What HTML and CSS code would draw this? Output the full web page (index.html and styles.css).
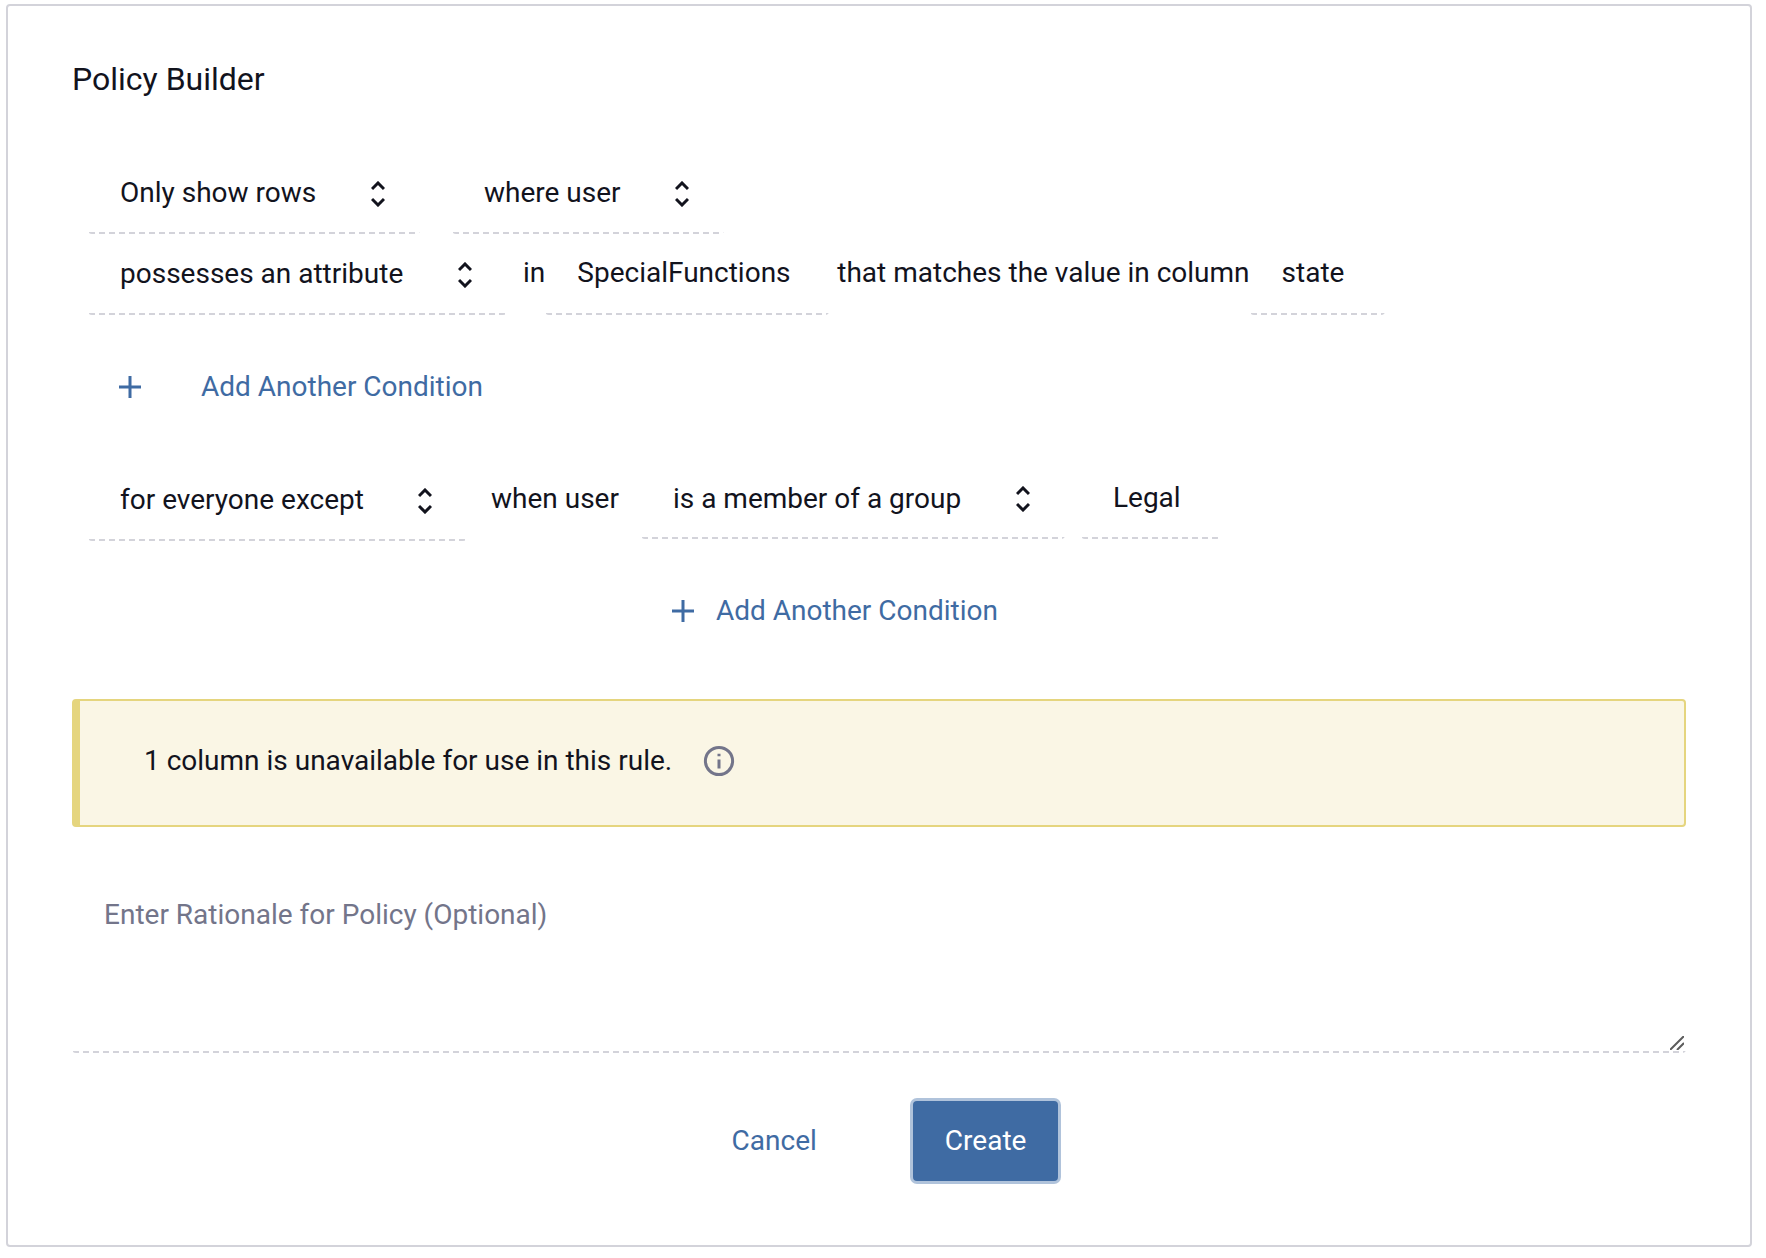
FILE: index.html
```html
<!DOCTYPE html>
<html lang="en">
<head>
<meta charset="utf-8">
<meta name="viewport" content="width=device-width, initial-scale=1">
<title>Policy Builder</title>
<link rel="stylesheet" href="styles.css">
</head>
<body>
<form class="card">
  <h1 class="title">Policy Builder</h1>

  <div class="rule">
    <div class="row row-wide">
      <div class="picker">
        <select class="field" aria-label="Row action"><option>Only show rows</option></select>
        <svg class="chevrons" viewBox="0 0 14 26" aria-hidden="true"><path d="M1 8 L7 2 L13 8 M1 18 L7 24 L13 18"/></svg>
      </div>
      <div class="picker">
        <select class="field" aria-label="Subject"><option>where user</option></select>
        <svg class="chevrons" viewBox="0 0 14 26" aria-hidden="true"><path d="M1 8 L7 2 L13 8 M1 18 L7 24 L13 18"/></svg>
      </div>
    </div>
    <div class="row">
      <div class="picker">
        <select class="field" aria-label="Condition"><option>possesses an attribute</option></select>
        <svg class="chevrons" viewBox="0 0 14 26" aria-hidden="true"><path d="M1 8 L7 2 L13 8 M1 18 L7 24 L13 18"/></svg>
      </div>
      <label class="word word-in" for="attribute">in</label>
      <input class="field field-attribute" id="attribute" type="text" value="SpecialFunctions">
      <label class="word word-that" for="column">that matches the value in column</label>
      <input class="field field-column" id="column" type="text" value="state">
    </div>
    <button class="link-button add-condition" type="button">
      <svg class="plus" viewBox="0 0 22 22" aria-hidden="true"><path d="M11 0 V22 M0 11 H22"/></svg>
      Add Another Condition
    </button>
  </div>

  <div class="rule">
    <div class="row">
      <div class="picker">
        <select class="field" aria-label="Exception"><option>for everyone except</option></select>
        <svg class="chevrons" viewBox="0 0 14 26" aria-hidden="true"><path d="M1 8 L7 2 L13 8 M1 18 L7 24 L13 18"/></svg>
      </div>
      <label class="word word-when" for="exception">when user</label>
      <div class="group">
        <div class="row row-group">
          <div class="picker">
            <select class="field" id="exception"><option>is a member of a group</option></select>
            <svg class="chevrons" viewBox="0 0 14 26" aria-hidden="true"><path d="M1 8 L7 2 L13 8 M1 18 L7 24 L13 18"/></svg>
          </div>
          <input class="field field-group" type="text" aria-label="Group" value="Legal">
        </div>
        <button class="link-button add-exception" type="button">
          <svg class="plus" viewBox="0 0 22 22" aria-hidden="true"><path d="M11 0 V22 M0 11 H22"/></svg>
          Add Another Condition
        </button>
      </div>
    </div>
  </div>

  <div class="notice" role="status">
    <span>1 column is unavailable for use in this rule.</span>
    <svg class="info" viewBox="0 0 32 32" role="img" aria-label="More information"><circle cx="16" cy="16" r="13.6"/><path d="M16 14.5 V23.5 M16 8.7 V11.3"/></svg>
  </div>

  <div class="rationale">
    <textarea class="rationale-input" aria-label="Rationale" placeholder="Enter Rationale for Policy (Optional)"></textarea>
    <svg class="grip" viewBox="0 0 14 14" aria-hidden="true"><path d="M0 14 L14 0 M7 14 L14 7"/></svg>
  </div>

  <div class="actions">
    <button class="link-button action" type="button">Cancel</button>
    <button class="action create" type="submit">Create</button>
  </div>
</form>
</body>
</html>
```
FILE: styles.css
```css
* {
  box-sizing: border-box;
}

body {
  margin: 0;
  padding: 4px 14px 11px 6px;
  background: #fff;
  color: #12131d;
  font: 28px/32px Roboto, "Liberation Sans", sans-serif;
}

button,
input,
select,
textarea {
  margin: 0;
  color: inherit;
  font: inherit;
}

.card {
  display: flow-root;
  padding: 51px 64px 64px;
  border: 2px solid #d3d3da;
  border-radius: 4px;
}

.title {
  margin: 0 0 52px;
  font-size: 32px;
  line-height: 44px;
  font-weight: 400;
}

.rule {
  margin: 0 16px 33px;
}

.row {
  display: flex;
  flex-wrap: wrap;
  align-items: flex-start;
}

.row-wide {
  gap: 32px;
}

.row-group {
  gap: 16px;
}

.picker {
  position: relative;
}

/* Dashed underline: 6px dashes, 4px gaps */
.field,
.rationale-input {
  display: block;
  border: 2px solid transparent;
  border-radius: 4px;
  background: repeating-linear-gradient(90deg, transparent 0 1px, #d3d3da 1px 7px, transparent 7px 10px) left bottom / 100% 2px no-repeat border-box;
}

.field {
  height: 81px;
  padding: 0 0 2px 30px;
  appearance: none;
}

input.field {
  padding-bottom: 4px;
}

.picker .field {
  padding-right: 101px;
}

.row-group .field {
  height: 79px;
}

.chevrons {
  position: absolute;
  top: 28px;
  right: 35px;
  width: 14px;
  height: 26px;
  fill: none;
  stroke: #12131d;
  stroke-width: 3;
  pointer-events: none;
}

.row-group .chevrons {
  top: 26px;
}

.word {
  line-height: 77px;
}

.word-in {
  margin-left: 16px;
}

.word-that {
  margin-left: 8px;
}

.word-when {
  margin: 0 22px 0 24px;
}

.field-attribute {
  width: 284px;
}

.field-column {
  width: 135px;
}

.field-group {
  width: 140px;
}

.link-button {
  display: flex;
  align-items: center;
  height: 80px;
  padding: 0 32px;
  border: 0;
  background: transparent;
  color: #3f6ba3;
  cursor: pointer;
}

.add-condition {
  gap: 60px;
  margin-top: 32px;
  padding: 0 31px;
}

.add-exception {
  gap: 22px;
  margin-top: 32px;
  padding: 0 31px;
}

.plus {
  width: 22px;
  height: 22px;
  fill: none;
  stroke: currentColor;
  stroke-width: 3;
}

.notice {
  display: flex;
  gap: 31px;
  margin-top: 48px;
  padding: 44px 64px 48px;
  border: 2px solid #e5d57e;
  border-left-width: 8px;
  border-radius: 4px;
  background: #faf6e5;
}

.info {
  width: 32px;
  height: 32px;
  fill: none;
  stroke: #73758a;
  stroke-width: 3;
}

.rationale {
  position: relative;
  margin-top: 40px;
}

.rationale-input {
  width: 100%;
  height: 186px;
  padding: 30px;
  resize: none;
}

.rationale-input::placeholder {
  color: #73758a;
  opacity: 1;
}

.grip {
  position: absolute;
  right: 2px;
  bottom: 3px;
  width: 14px;
  height: 14px;
  stroke: #5c5c5c;
  stroke-width: 2;
}

.actions {
  display: flex;
  justify-content: center;
  gap: 64px;
  margin-top: 48px;
}

.create {
  height: 80px;
  padding: 0 32px;
  border: 0;
  border-radius: 4px;
  background: #3f6ba3;
  box-shadow: 0 0 0 3px #b0c3db;
  color: #fff;
  cursor: pointer;
}
```
